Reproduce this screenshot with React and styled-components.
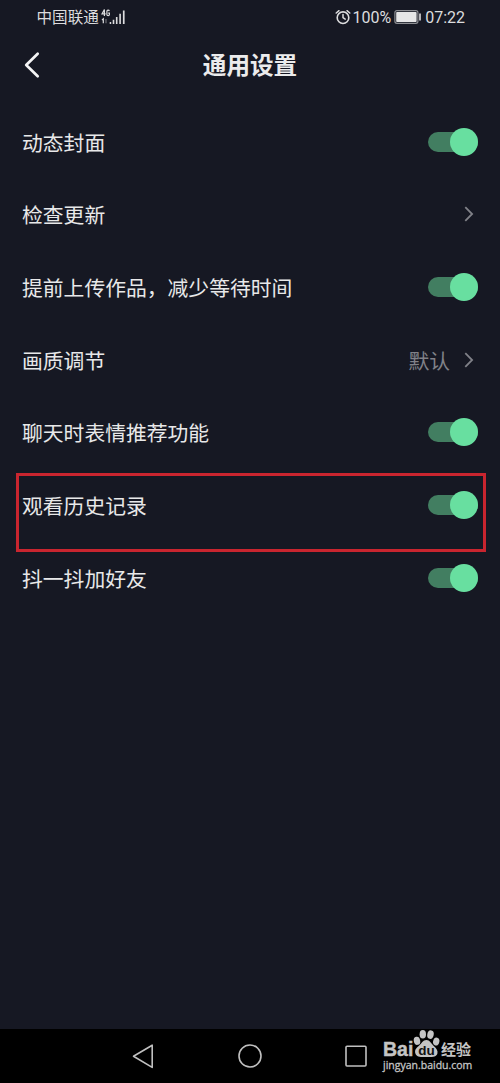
import React from "react";
import styled, { createGlobalStyle } from "styled-components";

const GlobalStyle = createGlobalStyle`
  body {
    margin: 0;
    background: #161823;
    font-family: Roboto, "Noto Sans CJK SC", sans-serif;
  }
`;

const Screen = styled.div`
  position: relative;
  display: flex;
  flex-direction: column;
  width: 500px;
  height: 1083px;
  overflow: hidden;
  background: #161823;
  color: #e8e8e9;
`;

const StatusBar = styled.div`
  display: flex;
  justify-content: space-between;
  align-items: center;
  height: 34px;
  padding: 0 35px 0 36.5px;
  box-sizing: border-box;
  color: #dcdcde;
`;

const StatusGroup = styled.div`
  display: flex;
  align-items: center;
  height: 34px;
`;

const Carrier = styled.span`
  margin-right: 2px;
  padding-top: 2px;
  font-size: 15.6px;
  line-height: 34px;
`;

const StatusText = styled.span`
  padding-top: 1px;
  font-size: 16px;
  line-height: 34px;
`;

const Header = styled.div`
  display: grid;
  grid-template-columns: 60px 1fr 60px;
  align-items: center;
  height: 62px;
`;

const BackButton = styled.button`
  display: flex;
  padding: 0 0 0 22px;
  border: none;
  background: none;
  color: #f4f4f5;
`;

const Title = styled.h1`
  margin: 0;
  padding-top: 2px;
  font-size: 23.6px;
  font-weight: 700;
  line-height: 36px;
  text-align: center;
  color: #ebebec;
`;

const List = styled.div`
  display: flex;
  flex-direction: column;
  flex: 1;
  padding-top: 9.5px;
`;

const Row = styled.div`
  position: relative;
  display: flex;
  justify-content: space-between;
  align-items: center;
  height: 72.65px;
  padding: 0 22px;
`;

const Label = styled.span`
  padding-top: 4px;
  font-size: 20.8px;
  line-height: 30px;
`;

const More = styled.div`
  display: flex;
  align-items: center;
  gap: 14px;
  padding-right: 4px;
  color: #808188;
`;

const Track = styled.div`
  display: flex;
  justify-content: flex-end;
  align-items: center;
  width: 50px;
  height: 20px;
  border-radius: 10px;
  background: #427e61;
`;

const Knob = styled.div`
  width: 28px;
  height: 28px;
  border-radius: 50%;
  background: #68dfa0;
`;

const Highlight = styled.div`
  position: absolute;
  top: 4px;
  left: 16px;
  width: 470px;
  height: 79px;
  box-sizing: border-box;
  border: 3px solid #c9252f;
`;

const NavBar = styled.div`
  display: flex;
  align-items: center;
  height: 54px;
  padding-left: 131px;
  gap: 82px;
  background: #000;
`;

const Watermark = styled.div`
  position: absolute;
  left: 383px;
  top: 1028px;
  width: 94px;
  color: #c4c4c4;
`;

const BrandLine = styled.div`
  display: flex;
  align-items: flex-end;
  height: 31px;
`;

const Bai = styled.span`
  width: 30px;
  font-family: "Liberation Sans", sans-serif;
  font-size: 19.5px;
  font-weight: 700;
  line-height: 20px;
  -webkit-text-stroke: 0.4px currentColor;
`;

const Jingyan = styled.span`
  font-size: 15px;
  font-weight: 700;
  line-height: 17px;
`;

const Site = styled.div`
  font-family: "Open Sans", sans-serif;
  font-size: 10.5px;
  line-height: 13px;
  white-space: nowrap;
  -webkit-text-stroke: 0.3px currentColor;
`;

const Signal = () => (
  <svg width="26" height="18" viewBox="0 0 26 18" fill="currentColor">
    <g fill="none" stroke="currentColor" strokeWidth="1.2">
      <path d="M3.4 8V1.500L1 5.900h3.600M8.300 3.200c-.3-1.400-2.400-1.300-2.400.2v3.100c0 1.600 2.500 1.600 2.500 0V5.200H7.200" />
      <path d="M1 12l1.300-1.200V15.200" />
      <path d="M5 11v4.200" opacity=".45" />
    </g>
    <path d="M8.700 14h1.500v2H8.700zM11.700 11.800h1.600V16h-1.600zM14.900 9h1.600v7h-1.600zM18.300 5.700h1.600V16h-1.600zM21.900 2.400h1.700V16h-1.700z" />
  </svg>
);

const Alarm = () => (
  <svg width="17" height="18" viewBox="0 0 17 18" fill="none" stroke="currentColor" strokeLinecap="round">
    <circle cx="8" cy="9.7" r="5.8" strokeWidth="1.6" />
    <path d="M8 6.5v3.2l2.2 1.5M1.2 5L4 2.7M14.8 5L12 2.7" strokeWidth="1.5" />
  </svg>
);

const BatteryIcon = styled.svg`
  margin: 0 3px;
`;

const Battery = () => (
  <BatteryIcon width="28" height="16" viewBox="0 0 28 16">
    <rect x=".9" y="1.7" width="23" height="12.6" rx="2" fill="none" stroke="#8d8e93" strokeWidth="1.2" />
    <rect x="2.2" y="3" width="20.4" height="10" rx=".8" fill="#e6e6e7" />
    <path d="M26 4.500v7" stroke="#dcdcde" strokeWidth="1.6" />
  </BatteryIcon>
);

const BackIcon = () => (
  <svg width="20" height="28" viewBox="0 0 20 28" fill="none" stroke="currentColor" strokeWidth="2.7" strokeLinecap="round">
    <path d="M15.7 2.8L4.2 14l11.5 11.2" strokeLinejoin="round" />
  </svg>
);

const Chevron = () => (
  <svg width="10" height="16" viewBox="0 0 10 16" fill="none" stroke="#808188" strokeWidth="1.8">
    <path d="M1.3 1.2L8.1 8l-6.8 6.8" />
  </svg>
);

const PawIcon = styled.svg`
  flex: none;
  margin: 0 1px 1px 0;
`;

const Paw = () => (
  <PawIcon width="27" height="29" viewBox="0 0 27 29" fill="#c4c4c4">
    <ellipse cx="4" cy="11.8" rx="3.2" ry="4.1" transform="rotate(-12 4 11.8)" />
    <ellipse cx="9.8" cy="5.2" rx="3.2" ry="4.3" />
    <ellipse cx="17.5" cy="5.6" rx="3.2" ry="4.3" transform="rotate(12 17.5 5.6)" />
    <ellipse cx="23.2" cy="12.6" rx="3.1" ry="4" transform="rotate(16 23.2 12.6)" />
    <path d="M13.4 11c-3.600 0-4.800 3.600-7.400 5.700C2.400 19.500 1.600 21.500 2.400 24.400c1 3.500 5 3.600 11 3.500 6.200.1 10.200-.1 11-3.500.7-2.900-.7-4.700-3.900-7.700C18 14.400 16.900 11 13.400 11z" />
    <text x="13.4" y="25.8" textAnchor="middle" fill="#111" fontFamily="Liberation Sans, sans-serif" fontWeight="700" fontSize="13.5">
      du
    </text>
  </PawIcon>
);

const settings = [
  { label: "动态封面", toggle: true },
  { label: "检查更新" },
  { label: "提前上传作品，减少等待时间", toggle: true },
  { label: "画质调节", value: "默认" },
  { label: "聊天时表情推荐功能", toggle: true },
  { label: "观看历史记录", toggle: true, highlight: true },
  { label: "抖一抖加好友", toggle: true },
];

const App = () => {
  return (
    <Screen>
      <GlobalStyle />
      <StatusBar>
        <StatusGroup>
          <Carrier>中国联通</Carrier>
          <Signal />
        </StatusGroup>
        <StatusGroup>
          <Alarm />
          <StatusText>100%</StatusText>
          <Battery />
          <StatusText>07:22</StatusText>
        </StatusGroup>
      </StatusBar>
      <Header>
        <BackButton aria-label="返回">
          <BackIcon />
        </BackButton>
        <Title>通用设置</Title>
      </Header>
      <List>
        {settings.map((item) => (
          <Row key={item.label}>
            <Label>{item.label}</Label>
            {item.toggle ? (
              <Track>
                <Knob />
              </Track>
            ) : (
              <More>
                {item.value && <Label>{item.value}</Label>}
                <Chevron />
              </More>
            )}
            {item.highlight && <Highlight />}
          </Row>
        ))}
      </List>
      <NavBar>
        <svg width="24" height="28" viewBox="0 0 24 28" fill="none" stroke="#c0c0c0" strokeWidth="1.6" strokeLinejoin="round">
          <path d="M21.2 3.2v22.2L2.5 14.3z" />
        </svg>
        <svg width="26" height="28" viewBox="0 0 26 28" fill="none" stroke="#c0c0c0" strokeWidth="1.6">
          <circle cx="13" cy="14" r="11" />
        </svg>
        <svg width="24" height="28" viewBox="0 0 24 28" fill="none" stroke="#c0c0c0" strokeWidth="1.6">
          <rect x="1" y="4.2" width="20" height="19.8" rx="1" />
        </svg>
      </NavBar>
      <Watermark>
        <BrandLine>
          <Bai>Bai</Bai>
          <Paw />
          <Jingyan>经验</Jingyan>
        </BrandLine>
        <Site>jingyan.baidu.com</Site>
      </Watermark>
    </Screen>
  );
};

export default App;
